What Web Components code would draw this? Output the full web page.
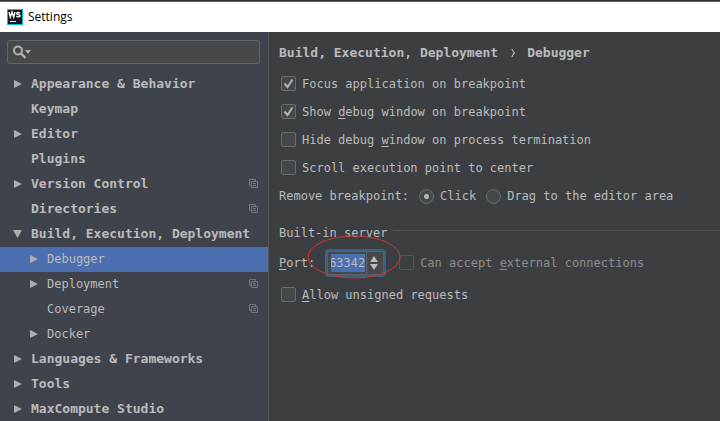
<!DOCTYPE html>
<html lang="en">
<head>
<meta charset="utf-8">
<title>Settings</title>
<style>
    body {
        margin: 0;
        background: #3c3f41;
    }
    u {
        text-underline-offset: 2px;
    }
</style>
</head>
<body>
<settings-window>
    <title-bar slot="title">Settings</title-bar>

    <search-box slot="side"></search-box>
    <nav-tree slot="side">
        <nav-item state="closed">Appearance &amp; Behavior</nav-item>
        <nav-item>Keymap</nav-item>
        <nav-item state="closed">Editor</nav-item>
        <nav-item>Plugins</nav-item>
        <nav-item state="closed" project>Version Control</nav-item>
        <nav-item project>Directories</nav-item>
        <nav-item state="open">Build, Execution, Deployment</nav-item>
        <nav-item state="closed" child selected>Debugger</nav-item>
        <nav-item state="closed" child project>Deployment</nav-item>
        <nav-item child project>Coverage</nav-item>
        <nav-item state="closed" child>Docker</nav-item>
        <nav-item state="closed">Languages &amp; Frameworks</nav-item>
        <nav-item state="closed">Tools</nav-item>
        <nav-item state="closed">MaxCompute Studio</nav-item>
    </nav-tree>

    <bread-crumb><span>Build, Execution, Deployment</span><span slot="page">Debugger</span></bread-crumb>
    <check-option checked>Focus application on breakpoint</check-option>
    <check-option checked>Show <u>d</u>ebug window on breakpoint</check-option>
    <check-option>Hide debug <u>w</u>indow on process termination</check-option>
    <check-option>Scroll execution point to center</check-option>
    <radio-choice>
        Remove breakpoint:
        <span slot="first">Click</span>
        <span slot="second">Drag to the editor area</span>
    </radio-choice>
    <section-title>Built-in server</section-title>
    <port-row value="63342">
        <span><u>P</u>ort:</span>
        <check-option slot="extra" disabled>Can accept <u>e</u>xternal connections</check-option>
    </port-row>
    <check-option><u>A</u>llow unsigned requests</check-option>
</settings-window>

<script>
class SettingsWindow extends HTMLElement {
    constructor() {
        super();
        this.attachShadow({ mode: 'open' });
        this.shadowRoot.innerHTML = `
            <style>
                :host {
                    display: flex;
                    flex-direction: column;
                    height: 100vh;
                    overflow: hidden;
                    color: #bbbbbb;
                    font: 12px/16px "DejaVu Sans Mono", monospace;
                }
                .body {
                    flex: 1;
                    display: grid;
                    grid-template-columns: 268px 1fr;
                    min-height: 0;
                }
                aside {
                    background: #3f434c;
                    padding-top: 8px;
                    overflow: hidden;
                }
                main {
                    border-left: 1px solid #515356;
                    padding: 8px 0 0 10px;
                    overflow: hidden;
                }
            </style>
            <slot name="title"></slot>
            <div class="body">
                <aside><slot name="side"></slot></aside>
                <main><slot></slot></main>
            </div>
        `;
    }
}

class TitleBar extends HTMLElement {
    constructor() {
        super();
        this.attachShadow({ mode: 'open' });
        this.shadowRoot.innerHTML = `
            <style>
                :host {
                    display: flex;
                    align-items: center;
                    gap: 5px;
                    height: 30px;
                    padding-left: 7px;
                    border-top: 1px solid #2b2f36;
                    box-shadow: inset 0 1px #2a70b8;
                    padding-top: 1px;
                    background: #ffffff;
                    color: #000000;
                    font: 12px/16px "Open Sans", "Noto Sans", sans-serif;
                }
            </style>
            <svg width="16" height="16" viewBox="0 0 16 16" aria-hidden="true">
                <rect width="16" height="16" fill="#0fb8d8"/>
                <rect x="1" y="1" width="14" height="14" fill="#15181c"/>
                <path d="M2 3l1.300 5 1.700-5 1.700 5L8 3" fill="none" stroke="#fff" stroke-width="1.400"/>
                <path d="M13 4.200c-.8-1-3.400-1-3.400.3 0 1.500 3.500.7 3.500 2.300 0 1.400-2.700 1.300-3.700.2" fill="none" stroke="#fff" stroke-width="1.400"/>
                <path d="M3 12.500h6" stroke="#fff"/>
            </svg>
            <slot></slot>
        `;
    }
}

class SearchBox extends HTMLElement {
    constructor() {
        super();
        this.attachShadow({ mode: 'open' });
        this.shadowRoot.innerHTML = `
            <style>
                :host {
                    display: flex;
                    align-items: center;
                    height: 22px;
                    margin: 0 8px 8px 7px;
                    padding-left: 5px;
                    border: 1px solid #646464;
                    border-radius: 3px;
                    background: #45494a;
                }
                input {
                    flex: 1;
                    min-width: 0;
                    border: 0;
                    outline: 0;
                    background: none;
                    color: inherit;
                    font: inherit;
                }
            </style>
            <svg width="18" height="14" viewBox="0 0 18 14" aria-hidden="true">
                <circle cx="5" cy="5.500" r="4" fill="none" stroke="#afb1b3" stroke-width="2"/>
                <path d="M8 8.500l4.500 4.500" stroke="#afb1b3" stroke-width="2.400"/>
                <path d="M12 5h6l-3 4z" fill="#afb1b3"/>
            </svg>
            <input type="text" aria-label="Search settings">
        `;
    }
}

class NavTree extends HTMLElement {
    constructor() {
        super();
        this.attachShadow({ mode: 'open' });
        this.shadowRoot.innerHTML = `
            <style>
                :host { display: block; }
            </style>
            <nav><slot></slot></nav>
        `;
    }
}

class NavItem extends HTMLElement {
    constructor() {
        super();
        this.attachShadow({ mode: 'open' });
    }

    connectedCallback() {
        const arrows = {
            closed: '<path d="M1 2l8 4-8 4z"/>',
            open: '<path d="M0 2h9l-4.500 8z"/>'
        };
        const arrow = arrows[this.getAttribute('state')] || '';
        const copy = this.hasAttribute('project') ? `
            <svg class="copy" width="9" height="9" viewBox="0 0 9 9" aria-hidden="true">
                <path d="M2.500 6.500h-2v-6h6v2M2.500 2.500h6v6h-6zM4 4.500h3M4 6.500h3"/>
            </svg>` : '';

        this.shadowRoot.innerHTML = `
            <style>
                :host {
                    display: block;
                    font-size: 13px;
                    font-weight: bold;
                }
                :host([child]) {
                    font-size: 12px;
                    font-weight: normal;
                }
                a {
                    display: flex;
                    align-items: center;
                    gap: 8px;
                    height: 23px;
                    padding: 0 10px 2px 13px;
                    color: inherit;
                    text-decoration: none;
                    white-space: nowrap;
                }
                :host([child]) a { padding-left: 29px; }
                :host([selected]) a { background: #4b6eaf; }
                .arrow {
                    flex: none;
                    fill: #adadad;
                }
                .copy {
                    margin-left: auto;
                    fill: none;
                    stroke: #73777c;
                }
            </style>
            <a href="#">
                <svg class="arrow" width="10" height="12" viewBox="0 0 10 12" aria-hidden="true">${arrow}</svg>
                <slot></slot>
                ${copy}
            </a>
        `;
    }
}

class BreadCrumb extends HTMLElement {
    constructor() {
        super();
        this.attachShadow({ mode: 'open' });
        this.shadowRoot.innerHTML = `
            <style>
                :host {
                    display: flex;
                    align-items: center;
                    gap: 11px;
                    height: 26px;
                    margin-bottom: 4px;
                    font-size: 13px;
                    font-weight: bold;
                }
            </style>
            <slot></slot>
            <svg width="7" height="10" viewBox="0 0 7 10" aria-hidden="true">
                <path d="M3 1q.5 2.500 2.500 4-2 1.500-2.500 4" fill="none" stroke="#bbb" stroke-width="1.200"/>
            </svg>
            <slot name="page"></slot>
        `;
    }
}

class CheckOption extends HTMLElement {
    constructor() {
        super();
        this.attachShadow({ mode: 'open' });
    }

    connectedCallback() {
        const checked = this.hasAttribute('checked') ? 'checked' : '';
        const disabled = this.hasAttribute('disabled') ? 'disabled' : '';
        this.shadowRoot.innerHTML = `
            <style>
                :host {
                    display: block;
                    padding-left: 2px;
                }
                :host([disabled]) { color: #8c8c8c; }
                label {
                    display: flex;
                    align-items: center;
                    gap: 6px;
                    height: 28px;
                    white-space: pre;
                }
                .box {
                    display: grid;
                    padding-bottom: 1px;
                }
                .box > * { grid-area: 1 / 1; }
                input {
                    appearance: none;
                    box-sizing: border-box;
                    width: 15px;
                    height: 15px;
                    margin: 0;
                    border: 1px solid #6b6b6b;
                    border-radius: 2px;
                    background: #43494a;
                }
                input:disabled {
                    border-color: #545556;
                    background: none;
                }
                svg {
                    visibility: hidden;
                    pointer-events: none;
                }
                input:checked + svg { visibility: visible; }
            </style>
            <label>
                <span class="box">
                    <input type="checkbox" ${checked} ${disabled}>
                    <svg width="15" height="15" viewBox="0 0 15 15" aria-hidden="true">
                        <path d="M3.500 7.500l3 3.500 5-7.500" fill="none" stroke="#b4b4b4" stroke-width="2"/>
                    </svg>
                </span>
                <span><slot></slot></span>
            </label>
        `;
    }
}

class RadioChoice extends HTMLElement {
    constructor() {
        super();
        this.attachShadow({ mode: 'open' });
        this.shadowRoot.innerHTML = `
            <style>
                :host {
                    display: flex;
                    align-items: center;
                    gap: 10px;
                    height: 28px;
                    white-space: nowrap;
                }
                label {
                    display: flex;
                    align-items: center;
                    gap: 6px;
                }
                input {
                    appearance: none;
                    box-sizing: border-box;
                    width: 15px;
                    height: 15px;
                    margin: 0;
                    border: 1px solid #6b6b6b;
                    border-radius: 50%;
                    background: #43494a;
                }
                input:checked {
                    background: radial-gradient(circle, #b4b4b4 2px, #43494a 3px);
                }
            </style>
            <span><slot></slot></span>
            <label><input type="radio" name="remove" checked><slot name="first"></slot></label>
            <label><input type="radio" name="remove"><slot name="second"></slot></label>
        `;
    }
}

class SectionTitle extends HTMLElement {
    constructor() {
        super();
        this.attachShadow({ mode: 'open' });
        this.shadowRoot.innerHTML = `
            <style>
                :host {
                    display: flex;
                    gap: 6px;
                    margin-top: 15px;
                }
                hr {
                    flex: 1;
                    height: 1px;
                    margin: 5px 0 0;
                    border: 0;
                    background: #515151;
                }
            </style>
            <slot></slot>
            <hr>
        `;
    }
}

class PortRow extends HTMLElement {
    constructor() {
        super();
        this.attachShadow({ mode: 'open' });
    }

    connectedCallback() {
        this.render();
        this.addEvents();
    }

    render() {
        this.shadowRoot.innerHTML = `
            <style>
                :host {
                    display: flex;
                    align-items: center;
                    height: 36px;
                    margin: 4px 0 0;
                    white-space: nowrap;
                }
                .spinner {
                    position: relative;
                    display: flex;
                    box-sizing: border-box;
                    height: 24px;
                    margin: 0 13px 0 12px;
                    padding: 2px 0 2px 3px;
                    border: 1px solid #5a6068;
                    border-radius: 2px;
                    background: #45494a;
                    box-shadow: 0 0 0 2px #3d6185;
                }
                input {
                    width: 34px;
                    margin: 0;
                    padding: 0;
                    border: 0;
                    outline: 0;
                    background: #4b6eaf;
                    color: inherit;
                    font: inherit;
                }
                .arrows {
                    display: flex;
                    flex-direction: column;
                    justify-content: center;
                    gap: 2px;
                    margin: -2px 0 -2px 1px;
                    padding: 0 5px 0 3px;
                    border-left: 1px solid #646464;
                }
                button {
                    display: flex;
                    padding: 0;
                    border: 0;
                    background: none;
                }
                /* red pen mark drawn over the field */
                .mark {
                    position: absolute;
                    left: -21px;
                    top: -17px;
                    pointer-events: none;
                }
            </style>
            <label for="port"><slot></slot></label>
            <div class="spinner">
                <input id="port" type="text" inputmode="numeric" value="${this.getAttribute('value')}">
                <div class="arrows">
                    <button type="button" data-step="1" aria-label="Increase">
                        <svg width="8" height="6" viewBox="0 0 8 6"><path d="M4 0l4 6H0z" fill="#bbb"/></svg>
                    </button>
                    <button type="button" data-step="-1" aria-label="Decrease">
                        <svg width="8" height="6" viewBox="0 0 8 6"><path d="M0 0h8L4 6z" fill="#bbb"/></svg>
                    </button>
                </div>
                <svg class="mark" width="94" height="44" viewBox="0 0 94 44" aria-hidden="true">
                    <ellipse cx="47" cy="22" rx="46" ry="21" fill="none" stroke="#cf3535"/>
                </svg>
            </div>
            <slot name="extra"></slot>
        `;
    }

    addEvents() {
        const input = this.shadowRoot.querySelector('#port');
        input.scrollLeft = input.scrollWidth;
        this.shadowRoot.querySelector('.arrows').addEventListener('click', (e) => {
            const button = e.target.closest('button');
            if (button) {
                input.value = Number(input.value) + Number(button.dataset.step);
            }
        });
    }
}

customElements.define('settings-window', SettingsWindow);
customElements.define('title-bar', TitleBar);
customElements.define('search-box', SearchBox);
customElements.define('nav-tree', NavTree);
customElements.define('nav-item', NavItem);
customElements.define('bread-crumb', BreadCrumb);
customElements.define('check-option', CheckOption);
customElements.define('radio-choice', RadioChoice);
customElements.define('section-title', SectionTitle);
customElements.define('port-row', PortRow);
</script>
</body>
</html>
